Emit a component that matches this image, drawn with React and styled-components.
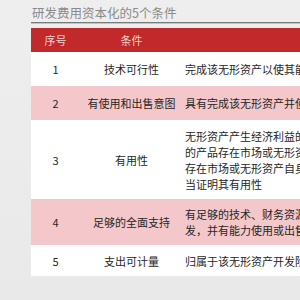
import React from 'react'
import styled, { createGlobalStyle } from 'styled-components'

const GlobalStyle = createGlobalStyle`
  html, body {
    margin: 0;
    padding: 0;
    overflow: hidden;
    background: #ebebeb;
  }
  body {
    font-family: "Noto Sans CJK SC", "Noto Sans", sans-serif;
  }
`

const Page = styled.div`
  width: 300px;
  height: 300px;
  padding-left: 31px;
  box-sizing: border-box;
  overflow: hidden;
  background: linear-gradient(180deg, #eeeeee 0%, #e9e9e9 100%);
`

const Title = styled.div`
  height: 23px;
  box-sizing: border-box;
  padding: 4px 0 0 1px;
  font-size: 12.5px;
  line-height: 17px;
  color: #8a8a8a;
  white-space: nowrap;
  border-bottom: 1px solid #7a7a7a;
  box-shadow: 0 1px 0 #c4c4c4;
`

const Table = styled.div`
  margin-top: 5px;
  width: 460px;
`

const Row = styled.div`
  display: grid;
  grid-template-columns: 49px 103px 1fr;
  align-items: center;
  height: ${p => p.$h}px;
  background: ${p => (p.$head ? '#c1292b' : p.$pink ? '#f4c8ca' : '#ffffff')};
  color: ${p => (p.$head ? '#f6cfcf' : '#262626')};
  font-size: 11px;
  line-height: 16px;
`

const Center = styled.div`
  text-align: center;
  white-space: nowrap;
`

const Desc = styled.div`
  padding-left: 2px;
`

const Line = styled.div`
  white-space: nowrap;
`

const rows = [
  { no: '1', name: '技术可行性', h: 34, lines: ['完成该无形资产以使其能够使用或出售在技术上具有可行性'] },
  { no: '2', name: '有使用和出售意图', h: 34, lines: ['具有完成该无形资产并使用或出售的意图'] },
  {
    no: '3',
    name: '有用性',
    h: 79,
    lines: [
      '无形资产产生经济利益的方式，包括能够证明运用该无形资产生产',
      '的产品存在市场或无形资产自身存在市场，无形资产将在内部使用',
      '存在市场或无形资产自身存在市场，无形资产将在内部使用的，应',
      '当证明其有用性',
    ],
  },
  {
    no: '4',
    name: '足够的全面支持',
    h: 46,
    lines: ['有足够的技术、财务资源和其他资源支持，以完成该无形资产的开', '发，并有能力使用或出售该无形资产'],
  },
  { no: '5', name: '支出可计量', h: 31, lines: ['归属于该无形资产开发阶段的支出能够可靠地计量'] },
]

export default function App() {
  return (
    <Page>
      <GlobalStyle />
      <Title>研发费用资本化的5个条件</Title>
      <Table>
        <Row $head $h={24}>
          <Center>序号</Center>
          <Center>条件</Center>
          <Desc />
        </Row>
        {rows.map((r, i) => (
          <Row key={r.no} $h={r.h} $pink={i % 2 === 1}>
            <Center>{r.no}</Center>
            <Center>{r.name}</Center>
            <Desc>
              {r.lines.map((l, j) => (
                <Line key={j}>{l}</Line>
              ))}
            </Desc>
          </Row>
        ))}
      </Table>
    </Page>
  )
}
